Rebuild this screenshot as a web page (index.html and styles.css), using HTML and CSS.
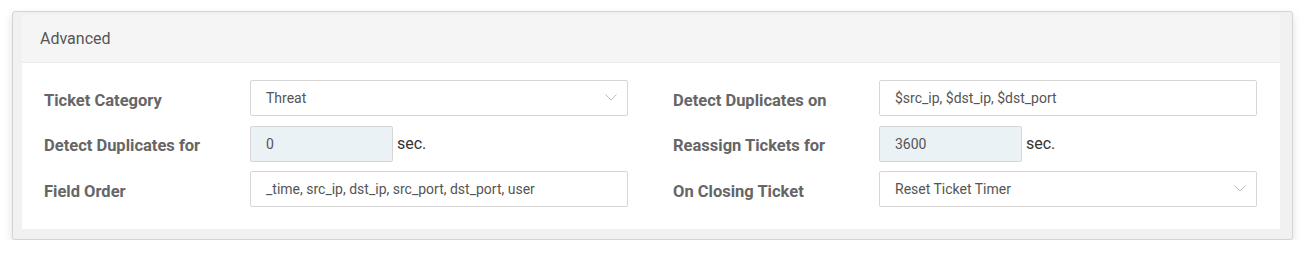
FILE: index.html
```html
<!DOCTYPE html>
<html lang="en">
<head>
    <meta charset="UTF-8">
    <meta name="viewport" content="width=device-width, initial-scale=1.0">
    <title>Advanced</title>
    <link rel="stylesheet" href="styles.css">
</head>
<body>

<div class="panel">
    <div class="card">
        <div class="card-header">Advanced</div>

        <div class="card-body">
            <!-- левая колонка -->
            <div class="column">
                <label class="field-label">Ticket Category</label>
                <div class="select">
                    <span>Threat</span>
                    <svg class="chevron" width="12" height="7" viewBox="0 0 12 7"><path d="M0.5 0.5 L6 6 L11.5 0.5" fill="none" stroke="#bdbdbd" stroke-width="1"/></svg>
                </div>

                <label class="field-label">Detect Duplicates for</label>
                <div class="with-unit">
                    <div class="input number">0</div>
                    <span class="unit">sec.</span>
                </div>

                <label class="field-label">Field Order</label>
                <div class="input">_time, src_ip, dst_ip, src_port, dst_port, user</div>
            </div>

            <!-- правая колонка -->
            <div class="column">
                <label class="field-label">Detect Duplicates on</label>
                <div class="input">$src_ip, $dst_ip, $dst_port</div>

                <label class="field-label">Reassign Tickets for</label>
                <div class="with-unit">
                    <div class="input number">3600</div>
                    <span class="unit">sec.</span>
                </div>

                <label class="field-label">On Closing Ticket</label>
                <div class="select">
                    <span>Reset Ticket Timer</span>
                    <svg class="chevron" width="12" height="7" viewBox="0 0 12 7"><path d="M0.5 0.5 L6 6 L11.5 0.5" fill="none" stroke="#bdbdbd" stroke-width="1"/></svg>
                </div>
            </div>
        </div>
    </div>
</div>

</body>
</html>
```

FILE: styles.css
```css
body {
    font-family: Roboto, "Liberation Sans", Arial, sans-serif;
    margin: 0;
    padding: 0;
    background-color: #ffffff;
}

.panel {
    width: 1258px;
    margin: 11px 0 0 12px;
    padding: 3px 12px 10px 9px;
    background-color: #f1f1f1;
    border: 1px solid #d4d4d4;
    border-radius: 3px;
    box-shadow: 0 4px 10px rgba(0, 0, 0, 0.12);
}

.card {
    background-color: #ffffff;
}

.card-header {
    height: 47px;
    line-height: 47px;
    padding-left: 18px;
    background-color: #f5f5f5;
    border-bottom: 1px solid #ebebeb;
    font-size: 16px;
    color: #555555;
}

.card-body {
    display: grid;
    grid-template-columns: 629px 628px;
    padding: 17px 0 22px;
}

.column {
    display: grid;
    grid-template-columns: 206px 378px;
    row-gap: 9.5px;
    padding-left: 22px;
    align-items: center;
}

.field-label {
    padding-top: 4px;
    font-size: 16.5px;
    font-weight: bold;
    color: #666666;
}

.input,
.select {
    box-sizing: border-box;
    height: 36px;
    padding: 0 15px;
    border: 1px solid #d6d6d6;
    border-radius: 2px;
    background-color: #ffffff;
    font-size: 14px;
    color: #555555;
    display: flex;
    align-items: center;
}

.select {
    justify-content: space-between;
}

.chevron {
    margin-right: -5px;
    margin-top: -2px;
}

.with-unit {
    display: flex;
    align-items: center;
}

.input.number {
    width: 143px;
    background-color: #ebf2f5;
}

.unit {
    margin-left: 4px;
    font-size: 16px;
    color: #333333;
}
```
